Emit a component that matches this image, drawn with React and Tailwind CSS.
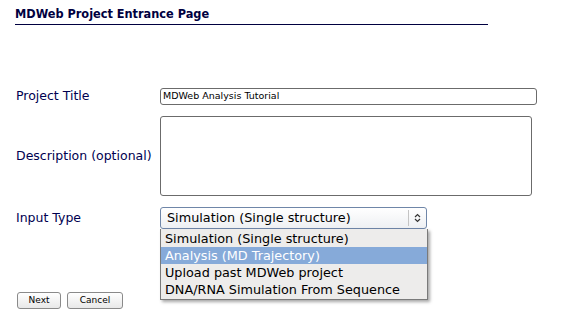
import React from 'react';

const OPTIONS = [
  'Simulation (Single structure)',
  'Analysis (MD Trajectory)',
  'Upload past MDWeb project',
  'DNA/RNA Simulation From Sequence',
];

export default function App() {
  return (
    <div className="w-[576px] h-[321px] bg-white relative overflow-hidden font-['DejaVu_Sans',sans-serif]">
      {/* Header */}
      <div className="ml-[15px] mt-[5px] w-[473px] border-b border-[#000040] font-['DejaVu_Sans_Condensed','DejaVu_Sans',sans-serif] text-[12.6px] font-bold text-[#000040] leading-[18px] pb-px">
        MDWeb Project Entrance Page
      </div>

      {/* Form */}
      <div className="mt-[62px] ml-[16px] flex flex-col">
        <div className="flex items-center h-[18px]">
          <span className="w-[144px] text-[12.5px] text-[#000050]">Project Title</span>
          <div className="w-[377px] h-[17px] border border-[#6b6b6b] rounded-[3px] flex items-center pl-[2px] text-[9.5px] text-black">
            MDWeb Analysis Tutorial
          </div>
        </div>

        <div className="flex items-center mt-[11px] h-[80px]">
          <span className="w-[144px] text-[12.5px] text-[#000050]">Description (optional)</span>
          <div className="w-[372px] h-[80px] border border-[#6b6b6b] rounded-[3px]" />
        </div>

        <div className="flex items-center mt-[11px] h-[22px]">
          <span className="w-[144px] text-[12.5px] text-[#000050]">Input Type</span>
          <div className="w-[267px] h-[22px] border border-[#6f86a8] rounded-[3px] bg-gradient-to-b from-white to-[#eef0f3] flex items-center text-[12.8px] text-black pl-[6px]">
            <span className="flex-1">Simulation (Single structure)</span>
            <div className="w-px h-[16px] bg-[#c4c4c4]" />
            <div className="w-[17px] flex justify-center">
              <svg width="7" height="10" viewBox="0 0 7 10" fill="none" stroke="#333" strokeWidth="1.2">
                <path d="M1 4 L3.5 1.5 L6 4" />
                <path d="M1 6 L3.5 8.5 L6 6" />
              </svg>
            </div>
          </div>
        </div>

        <div className="flex gap-[6px] mt-[63px] ml-px">
          <button className="w-[44px] h-[17px] border border-[#8a8a8a] rounded-[3px] bg-gradient-to-b from-white to-[#e8e8e8] text-[9px] text-black leading-none">
            Next
          </button>
          <button className="w-[56px] h-[17px] border border-[#8a8a8a] rounded-[3px] bg-gradient-to-b from-white to-[#e8e8e8] text-[9px] text-black leading-none">
            Cancel
          </button>
        </div>
      </div>

      {/* Open dropdown menu */}
      <div className="absolute left-[160px] top-[229px] w-[268px] border border-[#7a7a7a] border-t-0 bg-[#edeceb] shadow-[2px_2px_3px_rgba(0,0,0,0.35)] py-px">
        {OPTIONS.map((o, i) => (
          <div
            key={o}
            className={`h-[17px] pl-[4px] text-[12.8px] leading-[17px] ${i === 1 ? 'bg-[#86aad9] text-white' : 'text-black'}`}
          >
            {o}
          </div>
        ))}
      </div>
    </div>
  );
}
